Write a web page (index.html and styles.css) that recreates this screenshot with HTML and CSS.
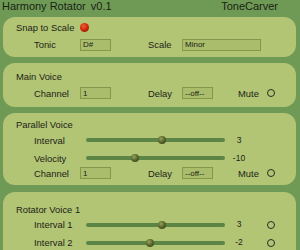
FILE: index.html
```html
<!DOCTYPE html>
<html lang="en">
<head>
  <meta charset="UTF-8">
  <title>Harmony Rotator</title>
  <link rel="stylesheet" href="styles.css">
</head>
<body>
  <div class="titlebar">
    <span>Harmony Rotator <span class="version">v0.1</span></span>
    <span>ToneCarver</span>
  </div>

  <!-- Scale -->
  <div class="panel panel-scale">
    <div class="heading">Snap to Scale <span class="led"></span></div>
    <div class="row">
      <span class="lbl">Tonic</span>
      <input type="text" value="D#">
      <span class="lbl lbl-mid">Scale</span>
      <input type="text" class="wide" value="Minor">
    </div>
  </div>

  <!-- Main voice -->
  <div class="panel panel-main">
    <div class="heading">Main Voice</div>
    <div class="row">
      <span class="lbl">Channel</span>
      <input type="text" value="1">
      <span class="lbl lbl-mid">Delay</span>
      <input type="text" value="--off--">
      <span class="mute">Mute</span>
      <span class="toggle"></span>
    </div>
  </div>

  <!-- Parallel voice -->
  <div class="panel panel-parallel">
    <div class="heading">Parallel Voice</div>
    <div class="row slider-row">
      <span class="lbl lbl-wide">Interval</span>
      <div class="track"><span class="thumb" style="left: 55%"></span></div>
      <span class="value">3</span>
    </div>
    <div class="row slider-row">
      <span class="lbl lbl-wide">Velocity</span>
      <div class="track"><span class="thumb" style="left: 35%"></span></div>
      <span class="value">-10</span>
    </div>
    <div class="row row-short">
      <span class="lbl">Channel</span>
      <input type="text" value="1">
      <span class="lbl lbl-mid">Delay</span>
      <input type="text" value="--off--">
      <span class="mute">Mute</span>
      <span class="toggle"></span>
    </div>
  </div>

  <!-- Rotator voice (continues below the fold) -->
  <div class="panel panel-rotator">
    <div class="heading">Rotator Voice 1</div>
    <div class="row slider-row">
      <span class="lbl lbl-wide">Interval 1</span>
      <div class="track"><span class="thumb" style="left: 55%"></span></div>
      <span class="value">3</span>
      <span class="toggle toggle-gap"></span>
    </div>
    <div class="row slider-row">
      <span class="lbl lbl-wide">Interval 2</span>
      <div class="track"><span class="thumb" style="left: 46%"></span></div>
      <span class="value">-2</span>
      <span class="toggle toggle-gap"></span>
    </div>
  </div>
</body>
</html>
```

FILE: styles.css
```css
body {
  margin: 0;
  width: 300px;
  height: 250px;
  overflow: hidden;
  background-color: #6e9a55;
  font-family: "Liberation Sans", Arial, sans-serif;
  color: #1c1e15;
}

.titlebar {
  display: flex;
  justify-content: space-between;
  height: 13px;
  line-height: 13px;
  font-size: 11px;
  padding: 0 22px 0 2px;
  margin-bottom: 4px;
}

.version {
  margin-left: 2px;
}

.panel {
  margin: 0 4px 6px 3px;
  padding-left: 13px;
  background-color: #b2c575;
  border-radius: 12px;
  font-size: 9.4px;
}

.panel-scale {
  padding-top: 4px;
  padding-bottom: 6px;
}

.panel-scale .row {
  margin-top: 4px;
}

.panel-main {
  padding-top: 7px;
  padding-bottom: 7.5px;
}

.panel-main .row {
  margin-top: 3.5px;
}

.panel-parallel {
  padding-top: 5px;
  padding-bottom: 6px;
  margin-bottom: 7px;
}

.panel-rotator {
  box-sizing: border-box;
  height: 58px;
  margin-bottom: 0;
  padding-top: 10.5px;
  overflow: hidden;
  border-radius: 12px 12px 0 0;
}

.heading {
  display: flex;
  align-items: center;
  height: 13px;
  line-height: 13px;
}

.led {
  width: 9px;
  height: 9px;
  margin-left: 6px;
  border-radius: 50%;
  background: radial-gradient(circle at 40% 35%, #f0603a 0%, #d22a0c 45%, #7a1604 100%);
}

.row {
  display: flex;
  align-items: center;
  height: 13px;
  line-height: 13px;
  margin-left: 18px;
}

.row-short {
  height: 12px;
}

.slider-row {
  height: 18px;
}

.lbl {
  width: 46px;
}

.lbl-wide {
  width: 52px;
}

.lbl-mid {
  margin-left: 37px;
  width: 34px;
}

input {
  box-sizing: border-box;
  width: 31px;
  height: 12px;
  margin: 0;
  padding: 0 0 0 2px;
  border: 1.5px solid #86964f;
  background-color: #aabd6c;
  font-family: "Liberation Sans", Arial, sans-serif;
  font-size: 8px;
  color: #1c1e15;
  outline: none;
}

input.wide {
  width: 79px;
}

.mute {
  margin-left: 25px;
  width: 29px;
}

.toggle {
  box-sizing: border-box;
  width: 8px;
  height: 8px;
  border: 1.3px solid #2a2c22;
  border-radius: 50%;
}

.toggle-gap {
  margin-left: 14px;
}

.track {
  position: relative;
  width: 139px;
  height: 4px;
  border-radius: 2px;
  background-color: #5b8445;
}

.thumb {
  position: absolute;
  top: 50%;
  width: 8px;
  height: 8px;
  border-radius: 50%;
  transform: translate(-50%, -50%);
  background: radial-gradient(circle at 38% 35%, #95a35c 0%, #56642a 50%, #2f3812 100%);
}

.value {
  width: 28px;
  text-align: center;
  font-size: 8.5px;
}
```
